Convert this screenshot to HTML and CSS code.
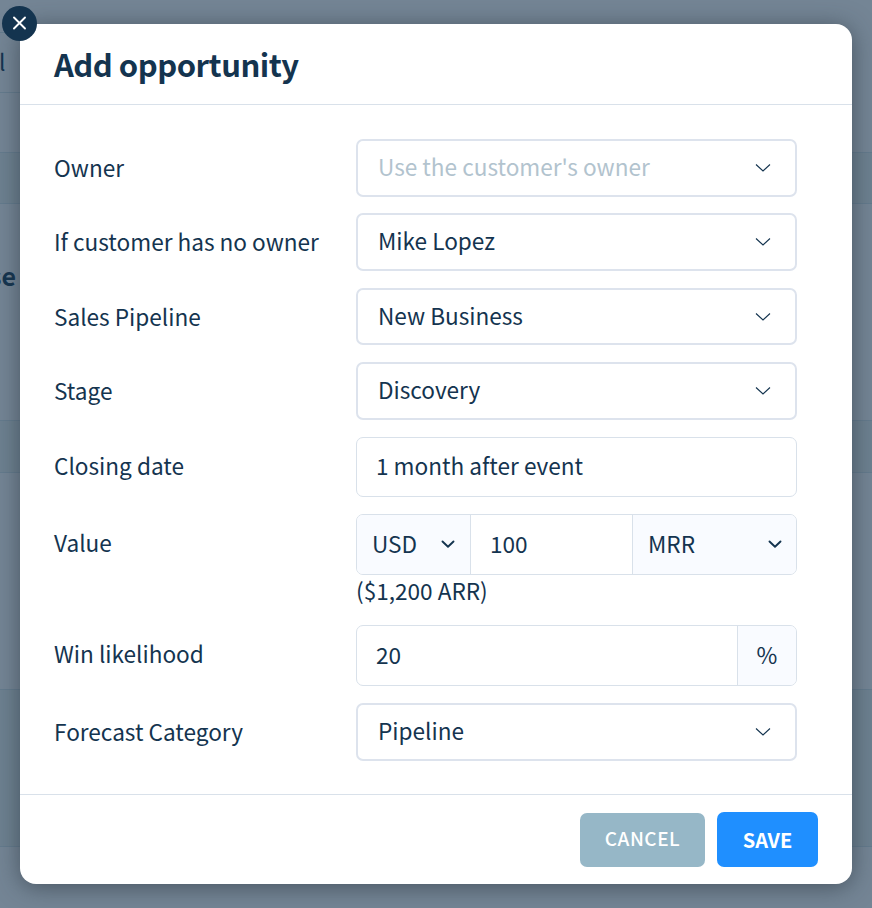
FILE: index.html
```html
<!DOCTYPE html>
<html lang="en">
<head>
<meta charset="utf-8">
<title>Add opportunity</title>
<link rel="stylesheet" href="styles.css">
</head>
<body>

<div class="page">
	<div class="band top"></div>
	<div class="band tab">l</div>
	<div class="band tab-after"></div>
	<div class="band strip head"></div>
	<div class="band section"><b>se</b></div>
	<div class="band strip"></div>
	<div class="band list"></div>
	<div class="band strip foot"></div>
	<div class="band rest"></div>
</div>

<form class="modal">
	<button type="button" class="close" aria-label="Close">
		<svg width="35" height="35" viewBox="0 0 35 35"><path d="M12 11.500l11 11M23 11.500l-11 11" /></svg>
	</button>

	<div class="modal-header">
		<h1>Add opportunity</h1>
	</div>

	<div class="modal-body">
		<div class="row">
			<label>Owner</label>
			<div class="select empty"><span>Use the customer's owner</span><svg class="arrow" viewBox="0 0 16 10"><path d="M1 1.5l7 6.500 7-6.500" /></svg></div>
		</div>
		<div class="row">
			<label>If customer has no owner</label>
			<div class="select"><span>Mike Lopez</span><svg class="arrow" viewBox="0 0 16 10"><path d="M1 1.5l7 6.500 7-6.500" /></svg></div>
		</div>
		<div class="row">
			<label>Sales Pipeline</label>
			<div class="select"><span>New Business</span><svg class="arrow" viewBox="0 0 16 10"><path d="M1 1.5l7 6.500 7-6.500" /></svg></div>
		</div>
		<div class="row">
			<label>Stage</label>
			<div class="select"><span>Discovery</span><svg class="arrow" viewBox="0 0 16 10"><path d="M1 1.5l7 6.500 7-6.500" /></svg></div>
		</div>
		<div class="row">
			<label>Closing date</label>
			<div class="input date"><span>1 month after event</span></div>
		</div>
		<div class="row">
			<label class="tall">Value</label>
			<div class="field">
				<div class="group value">
					<div class="addon currency"><span>USD</span><svg class="chevron" viewBox="0 0 14 10"><path d="M1.5 2.500l5.500 5.300 5.500-5.300" /></svg></div>
					<div class="amount"><span>100</span></div>
					<div class="addon period"><span>MRR</span><svg class="chevron" viewBox="0 0 14 10"><path d="M1.5 2.500l5.500 5.300 5.500-5.300" /></svg></div>
				</div>
				<div class="note">($1,200 ARR)</div>
			</div>
		</div>
		<div class="row">
			<label class="tall">Win likelihood</label>
			<div class="group likelihood">
				<div class="amount"><span>20</span></div>
				<div class="addon percent"><span>%</span></div>
			</div>
		</div>
		<div class="row">
			<label>Forecast Category</label>
			<div class="select"><span>Pipeline</span><svg class="arrow" viewBox="0 0 16 10"><path d="M1 1.5l7 6.500 7-6.500" /></svg></div>
		</div>
	</div>

	<div class="modal-footer">
		<button type="button" class="btn cancel">CANCEL</button>
		<button type="button" class="btn save">SAVE</button>
	</div>
</form>

</body>
</html>
```
FILE: styles.css
```css
* { box-sizing: border-box; }
body { margin: 0; height: 908px; overflow: hidden; position: relative; background: #748595; color: #14344f; font-family: "Noto Sans CJK SC", "Noto Sans", sans-serif; font-size: 22.6px; line-height: 34px; }

/* dimmed page behind the dialog */
.page { display: flex; flex-direction: column; height: 908px; }
.band { flex: none; border-bottom: 1px solid #647b8d; }
.top { height: 33px; width: 20px; }
.tab { height: 60px; width: 20px; padding-top: 12px; text-indent: -1px; }
.tab-after { height: 60px; }
.strip { background: #6d8190; height: 52px; }
.head { height: 51px; }
.section { height: 217px; padding-top: 54px; text-indent: -11px; font-size: 25px; }
.list { height: 217px; }
.foot { height: 157px; }
.rest { flex: 1; border: 0; }

.modal { position: absolute; left: 20px; top: 24px; width: 832px; height: 860px; margin: 0; background: #fff; border-radius: 16px; box-shadow: 0 3px 24px rgba(40,50,60,0.6); display: flex; flex-direction: column; }
.close { position: absolute; left: -17.7px; top: -17.7px; width: 35px; height: 35px; padding: 0; border: 0; border-radius: 50%; background: #14344f; }
.close svg { display: block; fill: none; stroke: #fff; stroke-width: 1.9; stroke-linecap: round; }

.modal-header { height: 81px; padding: 0 34px; border-bottom: 1px solid #d9e1ea; display: flex; align-items: center; }
h1 { margin: 0; font-size: 31px; line-height: 44px; font-weight: bold; letter-spacing: -0.5px; }

.modal-body { flex: 1; padding: 34px 55px 0 34px; display: flex; flex-direction: column; gap: 16.8px; }
.row { display: grid; grid-template-columns: 302px 441px; }
label { height: 57.6px; line-height: 57px; }
.tall { line-height: 58px; }

.select, .input, .group { display: flex; align-items: center; border: 1px solid #d9e1ea; border-radius: 7px; }
.select { height: 57.6px; border: 2px solid #dde3ed; padding: 0 24px 0 20px; justify-content: space-between; }
.select span { padding-bottom: 2px; }
.empty span { color: #b2c3ce; }
.arrow { width: 16px; height: 10px; fill: none; stroke: #14344f; stroke-width: 1.1; }
.date { height: 60.4px; padding: 0 19px; }
.date span, .group span { padding-bottom: 2px; }
.group { height: 60.8px; overflow: hidden; align-items: stretch; }
.value span { padding-bottom: 0; }
.likelihood { height: 61px; }
.group > div { display: flex; align-items: center; }
.amount { flex: 1; padding-left: 19px; }
.addon { background: #f9fbff; justify-content: space-between; padding: 0 15px 0 15px; }
.currency { width: 114px; border-right: 1px solid #d9e1ea; }
.period { width: 164px; border-left: 1px solid #d9e1ea; padding-right: 14px; }
.group .percent { width: 59px; padding: 0; justify-content: center; border-left: 1px solid #d9e1ea; }
.chevron { width: 14px; height: 10px; fill: none; stroke: #14344f; stroke-width: 1.9; stroke-linecap: round; stroke-linejoin: round; }
.note { height: 34px; line-height: 32px; }

.modal-footer { height: 90px; border-top: 1px solid #d9e1ea; padding: 17px 34px 0 0; display: flex; justify-content: flex-end; gap: 12px; }
.btn { border: 0; border-radius: 7px; padding: 0; color: #fff; font-family: inherit; font-weight: 500; font-size: 19px; }
.cancel { width: 125px; height: 54px; margin-top: 1px; padding-bottom: 5px; background: #96b7c7; letter-spacing: 0.5px; }
.save { width: 101px; height: 55px; background: #1f8fff; font-size: 20px; font-weight: bold; }
```
